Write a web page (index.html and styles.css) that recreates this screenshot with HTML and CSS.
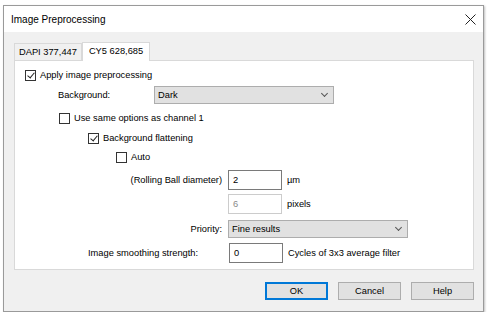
FILE: index.html
```html
<!DOCTYPE html>
<html lang="en">
  <head>
    <meta charset="UTF-8" />
    <title>Image Preprocessing</title>
    <link rel="stylesheet" href="styles.css">
  </head>
  <body>
    <div class="dialog">
      <div class="titlebar">
        <span class="title">Image Preprocessing</span>
        <svg class="close" width="11" height="11" viewBox="0 0 11 11">
          <path d="M0.5 0.5 L10.5 10.5 M10.5 0.5 L0.5 10.5" stroke="#222" stroke-width="1" fill="none" />
        </svg>
      </div>

      <div class="content">
        <div class="tabs">
          <div class="tab">DAPI 377,447</div>
          <div class="tab active">CY5 628,685</div>
        </div>

        <div class="panel">
          <div class="row r-apply">
            <span class="check checked"></span>
            <span>Apply image preprocessing</span>
          </div>

          <div class="row r-background">
            <span class="lbl-bg">Background:</span>
            <div class="combo combo-bg">
              <span>Dark</span>
              <span class="chev"></span>
            </div>
          </div>

          <div class="row r-same">
            <span class="check"></span>
            <span>Use same options as channel 1</span>
          </div>

          <div class="row r-flatten">
            <span class="check checked"></span>
            <span>Background flattening</span>
          </div>

          <div class="row r-auto">
            <span class="check"></span>
            <span>Auto</span>
          </div>

          <div class="row r-field r-ball">
            <span class="lbl-right">(Rolling Ball diameter)</span>
            <div class="edit">2</div>
            <span class="unit">µm</span>
          </div>

          <div class="row r-field r-pixels">
            <span class="lbl-right"></span>
            <div class="edit disabled">6</div>
            <span class="unit">pixels</span>
          </div>

          <div class="row r-field r-priority">
            <span class="lbl-right">Priority:</span>
            <div class="combo combo-priority">
              <span>Fine results</span>
              <span class="chev"></span>
            </div>
          </div>

          <div class="row r-field r-smooth">
            <span class="lbl-smooth">Image smoothing strength:</span>
            <div class="edit">0</div>
            <span class="unit">Cycles of 3x3 average filter</span>
          </div>
        </div>

        <div class="buttons">
          <div class="btn default">OK</div>
          <div class="btn">Cancel</div>
          <div class="btn">Help</div>
        </div>
      </div>
    </div>
  </body>
</html>
```

FILE: styles.css
```css
body {
  margin: 0;
  background-color: #ffffff;
  font-family: "Liberation Sans", Arial, sans-serif;
  font-size: 9.3px;
  color: #000;
}

.dialog {
  margin: 5px 0 0 3px;
  width: 479px;
  height: 305px;
  border: 1px solid #9a9a9a;
  background-color: #f0f0f0;
  box-shadow: 1px 1px 2px rgba(0, 0, 0, 0.25);
  display: flex;
  flex-direction: column;
}

.titlebar {
  height: 26px;
  background-color: #ffffff;
  display: flex;
  align-items: center;
  justify-content: space-between;
  padding: 0 7px 0 7px;
}

.title {
  font-size: 10px;
}

.close {
  margin-top: 1px;
}

.content {
  padding: 10px 9px 0 10px;
}

/* tabs */

.tabs {
  display: flex;
  height: 18px;
  align-items: flex-end;
  white-space: nowrap;
}

.tab {
  height: 16px;
  line-height: 16px;
  padding: 0 4px;
  border: 1px solid #d9d9d9;
  border-bottom: none;
  background-color: #f0f0f0;
}

.tab.active {
  height: 18px;
  line-height: 17px;
  padding: 0 6px;
  background-color: #ffffff;
  margin-bottom: -1px;
  position: relative;
}

.panel {
  height: 208px;
  background-color: #ffffff;
  border: 1px solid #d9d9d9;
  width: 458px;
}

.row {
  display: flex;
  align-items: center;
  white-space: nowrap;
}

.r-apply { height: 18px; margin-top: 5px; padding-left: 10px; }
.r-background { height: 18px; margin-top: 2px; padding-left: 43px; }
.r-same { height: 18px; margin-top: 5px; padding-left: 44px; }
.r-flatten { height: 18px; margin-top: 2px; padding-left: 73px; }
.r-auto { height: 18px; margin-top: 1px; padding-left: 101px; }
.r-ball { height: 20px; margin-top: 4px; }
.r-pixels { height: 20px; margin-top: 4px; }
.r-priority { height: 18px; margin-top: 6px; }
.r-smooth { height: 20px; margin-top: 5px; padding-left: 73px; }

/* checkboxes */

.check {
  width: 9px;
  height: 9px;
  border: 1px solid #333;
  background-color: #fff;
  margin-right: 4px;
  position: relative;
  flex-shrink: 0;
}

.check.checked::after {
  content: "";
  position: absolute;
  left: 2.5px;
  top: 0px;
  width: 3px;
  height: 6px;
  border-right: 1.2px solid #222;
  border-bottom: 1.2px solid #222;
  transform: rotate(40deg);
}

/* labels */

.lbl-bg {
  width: 96px;
}

.lbl-right {
  width: 207px;
  text-align: right;
  margin-right: 6px;
}

.lbl-smooth {
  width: 140px;
  margin-right: 1px;
}

.unit {
  margin-left: 5px;
}

/* combos */

.combo {
  height: 16px;
  border: 1px solid #adadad;
  background-color: #e1e1e1;
  display: flex;
  align-items: center;
  justify-content: space-between;
  padding: 0 6px 0 3px;
}

.combo-bg {
  width: 169px;
}

.combo-priority {
  width: 169px;
}

.chev {
  width: 4px;
  height: 4px;
  border-right: 1px solid #555;
  border-bottom: 1px solid #555;
  transform: rotate(45deg);
  margin-top: -3px;
}

/* edits */

.edit {
  width: 48px;
  height: 18px;
  line-height: 18px;
  border: 1px solid #7a7a7a;
  padding-left: 4px;
  background-color: #fff;
}

.edit.disabled {
  border-color: #cccccc;
  color: #8a8a8a;
}

/* buttons */

.buttons {
  display: flex;
  justify-content: flex-end;
  gap: 10px;
  margin-top: 12px;
  padding-right: 0;
}

.btn {
  width: 61px;
  height: 16px;
  line-height: 16px;
  text-align: center;
  border: 1px solid #adadad;
  background-color: #e1e1e1;
}

.btn.default {
  border-color: #0078d7;
  box-shadow: inset 0 0 0 1px #0078d7;
}
```
